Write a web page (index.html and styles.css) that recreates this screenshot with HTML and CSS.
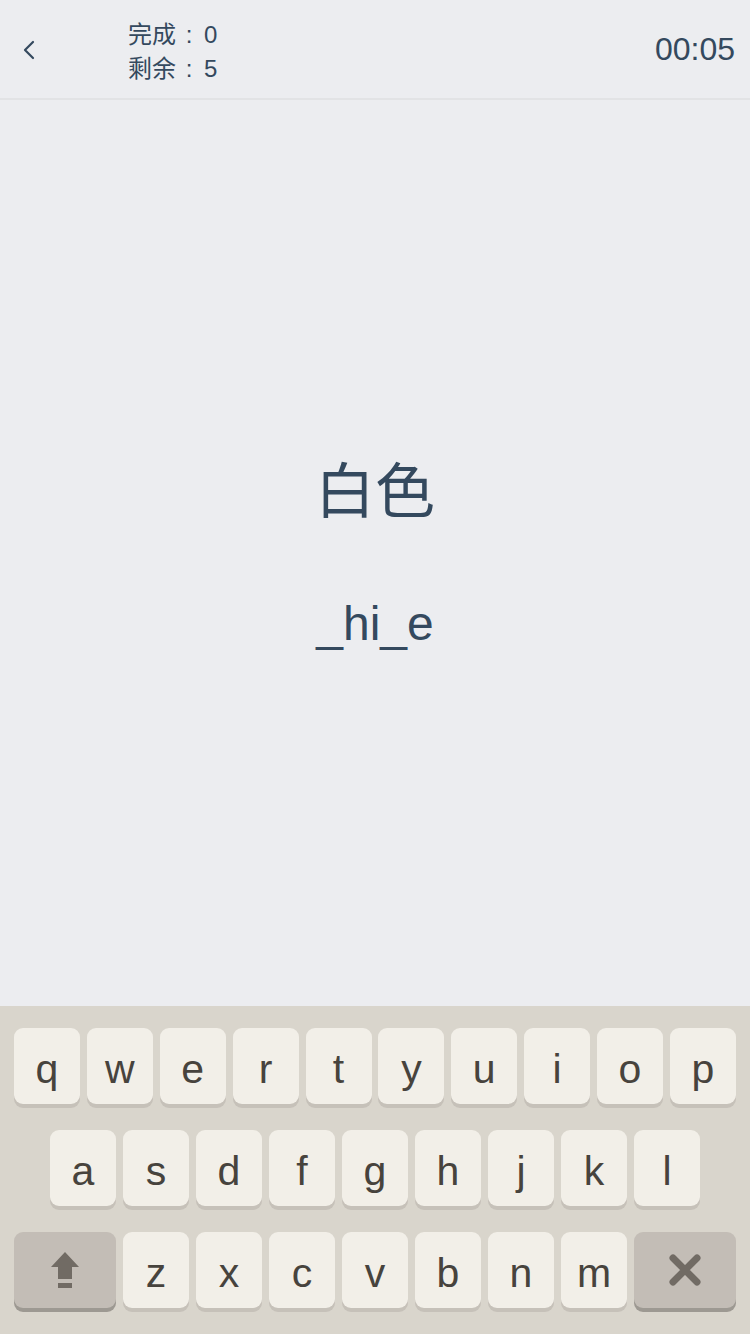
FILE: index.html
```html
<!DOCTYPE html>
<html lang="zh">
<head>
<meta charset="utf-8">
<title>拼写</title>
<link rel="stylesheet" href="styles.css">
</head>
<body>
<div class="app">
  <header class="header">
    <div class="back">
      <svg width="14" height="20" viewBox="0 0 14 20"><path d="M11 2 L3 10 L11 18" fill="none" stroke="#34495e" stroke-width="2.2" stroke-linecap="round" stroke-linejoin="round"/></svg>
    </div>
    <div class="stats">
      <div>完成<span class="colon">:</span><span class="num">0</span></div>
      <div>剩余<span class="colon">:</span><span class="num">5</span></div>
    </div>
    <div class="timer">00:05</div>
  </header>
  <main class="main">
    <div class="word">白色</div>
    <div class="spell">_hi_e</div>
  </main>
  <section class="keyboard">
    <div class="row row1">
      <div class="key">q</div><div class="key">w</div><div class="key">e</div><div class="key">r</div><div class="key">t</div><div class="key">y</div><div class="key">u</div><div class="key">i</div><div class="key">o</div><div class="key">p</div>
    </div>
    <div class="row row2">
      <div class="key">a</div><div class="key">s</div><div class="key">d</div><div class="key">f</div><div class="key">g</div><div class="key">h</div><div class="key">j</div><div class="key">k</div><div class="key">l</div>
    </div>
    <div class="row row3">
      <div class="key special">
        <svg width="30" height="38" viewBox="0 0 30 38"><path d="M15 1 L29 16 L22 16 L22 28 L8 28 L8 16 L1 16 Z" fill="#716b64"/><rect x="8" y="32" width="14" height="5" fill="#716b64"/></svg>
      </div>
      <div class="key">z</div><div class="key">x</div><div class="key">c</div><div class="key">v</div><div class="key">b</div><div class="key">n</div><div class="key">m</div>
      <div class="key special">
        <svg width="34" height="34" viewBox="0 0 34 34"><path d="M5 5 L29 29 M29 5 L5 29" fill="none" stroke="#716b64" stroke-width="7" stroke-linecap="round"/></svg>
      </div>
    </div>
  </section>
</div>
</body>
</html>
```

FILE: styles.css
```css
* { box-sizing: border-box; }
html, body { margin: 0; padding: 0; }
body {
  width: 750px;
  height: 1334px;
  background: #ecedf0;
  font-family: "Liberation Sans", "Noto Sans CJK SC", sans-serif;
  color: #34495e;
  overflow: hidden;
}
.app {
  display: flex;
  flex-direction: column;
  height: 1334px;
}
.header {
  height: 100px;
  flex: 0 0 100px;
  border-bottom: 2px solid #e2e3e5;
  display: flex;
  align-items: center;
  padding: 0 15px 0 22px;
}
.back {
  width: 106px;
  display: flex;
  align-items: center;
  padding-top: 2px;
}
.stats {
  font-size: 24px;
  line-height: 34px;
  flex: 1;
  padding-top: 6px;
}
.colon {
  display: inline-block;
  width: 26px;
  text-align: center;
}
.num {
  margin-left: 2px;
}
.timer {
  font-size: 32px;
  line-height: 40px;
}
.main {
  flex: 1;
  display: flex;
  flex-direction: column;
  align-items: center;
  justify-content: center;
  gap: 66px;
  padding-top: 4px;
}
.word {
  font-size: 60px;
  line-height: 72px;
}
.spell {
  font-size: 48px;
  line-height: 58px;
}
.keyboard {
  flex: 0 0 328px;
  height: 328px;
  background: #d9d5cc;
  padding-top: 22px;
  display: flex;
  flex-direction: column;
  gap: 26px;
}
.row {
  display: flex;
  gap: 7px;
  justify-content: center;
}
.row1 {
  justify-content: space-between;
  gap: 0;
  padding: 0 14px;
}
.key {
  width: 66px;
  height: 76px;
  border-radius: 9px;
  background: #f2efe8;
  box-shadow: 0 4px 0 #c6c1b9;
  display: flex;
  align-items: center;
  justify-content: center;
  font-size: 41px;
  color: #47433d;
  padding-top: 6px;
}
.key.special {
  width: 102px;
  background: #c3bdb6;
  box-shadow: 0 4px 0 #9d9992;
  padding-top: 0;
}
```
